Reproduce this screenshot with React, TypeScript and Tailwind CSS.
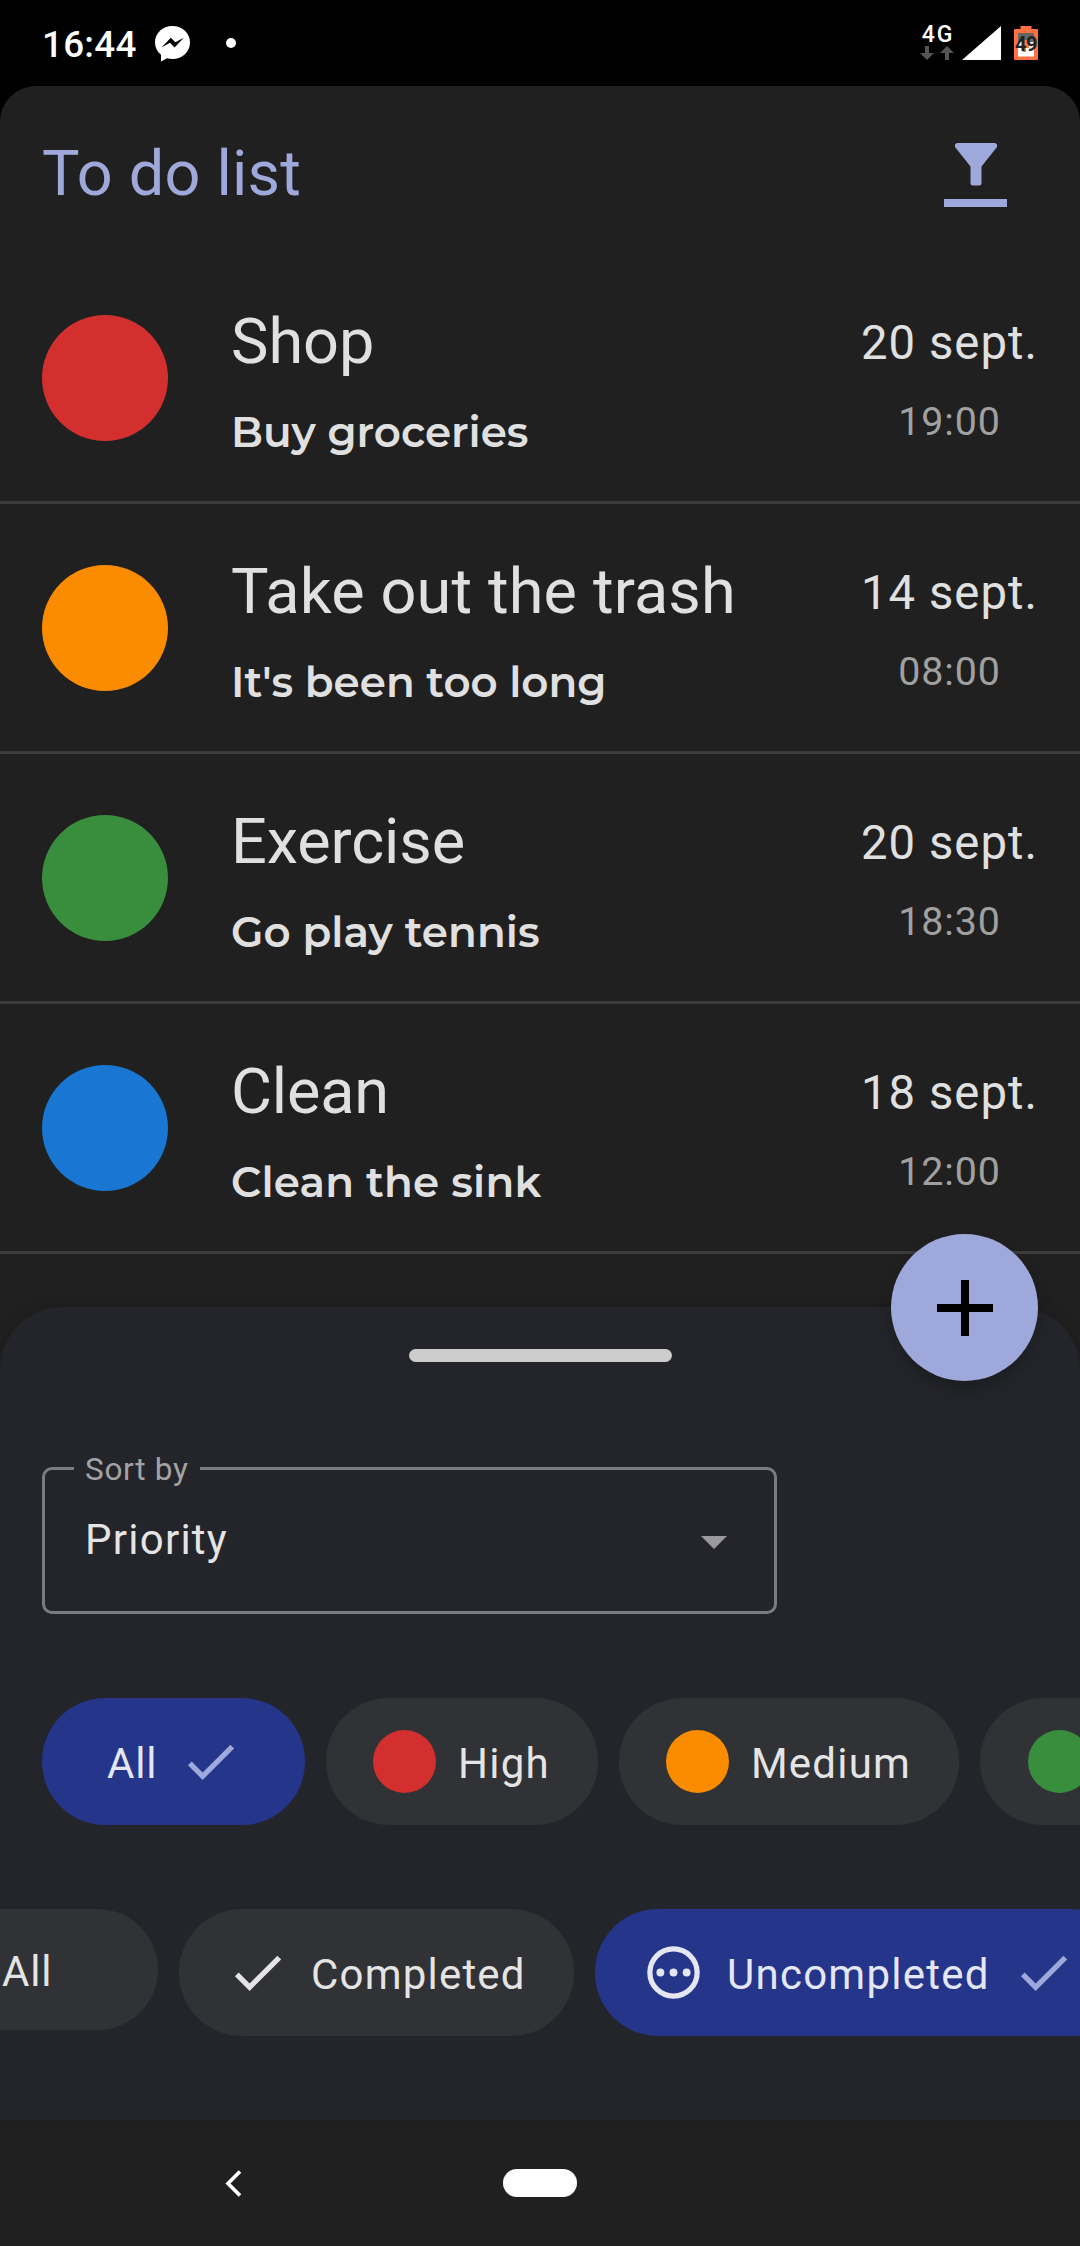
import type { ReactNode } from "react";

type Task = {
  title: string;
  titleSpacing: string;
  note: string;
  noteSpacing: string;
  date: string;
  time: string;
  color: string;
};

const tasks: Task[] = [
  { title: "Shop", titleSpacing: "tracking-normal", note: "Buy groceries", noteSpacing: "tracking-normal", date: "20 sept.", time: "19:00", color: "bg-[#d32f2f]" },
  { title: "Take out the trash", titleSpacing: "tracking-[0.15px]", note: "It's been too long", noteSpacing: "tracking-[0.02px]", date: "14 sept.", time: "08:00", color: "bg-[#fb8c00]" },
  { title: "Exercise", titleSpacing: "tracking-[-0.1px]", note: "Go play tennis", noteSpacing: "tracking-[0.1px]", date: "20 sept.", time: "18:30", color: "bg-[#388e3c]" },
  { title: "Clean", titleSpacing: "tracking-[-0.2px]", note: "Clean the sink", noteSpacing: "tracking-[0.22px]", date: "18 sept.", time: "12:00", color: "bg-[#1976d2]" },
];

function Check({ className }: { className: string }) {
  return (
    <svg viewBox="0 0 24 24" className={`h-[63px] w-[63px] shrink-0 ${className}`} fill="currentColor">
      <path d="M9 16.17 4.83 12l-1.42 1.41L9 19 21 7l-1.41-1.41z" />
    </svg>
  );
}

function Pending() {
  return (
    <svg viewBox="0 0 24 24" className="h-[63px] w-[63px] shrink-0" fill="currentColor">
      <circle cx="12" cy="12" r="9" fill="none" stroke="currentColor" strokeWidth="2" />
      <circle cx="7" cy="12" r="1.5" />
      <circle cx="12" cy="12" r="1.5" />
      <circle cx="17" cy="12" r="1.5" />
    </svg>
  );
}

function StatusBar() {
  return (
    <div className="flex h-[86px] shrink-0 items-start bg-black text-white">
      <span className="ml-[42px] mt-[23px] w-[113px] text-[36.75px] font-medium leading-[44px] tracking-[0.3px]">16:44</span>
      <svg viewBox="0 0 35 36" className="mt-[26px] h-[36px] w-[35px]">
        <path
          fill="#fff"
          d="M17.5 0C7.6 0 0 7.1 0 16.5c0 5 2.2 9.2 6 12.3V35.6l6-3.3c1.7.5 3.6.7 5.5.7C27.4 33 35 25.9 35 16.5S27.4 0 17.5 0Z"
        />
        <path fill="#000" d="m6.5 21.5 9.3-9.8 4.6 4.6 8.4-4.6-9.2 9.8-4.6-4.7Z" />
      </svg>
      <span className="ml-[36px] mt-[38px] h-[10px] w-[10px] rounded-full bg-white" />
      <div className="ml-auto flex">
        <div className="mt-[23px] flex w-[36px] flex-col items-center">
          <span className="pl-[2px] text-[23px] font-medium leading-[24px] tracking-[2px]">4G</span>
          <svg viewBox="0 0 34 14" className="-mt-px h-[14px] w-[34px]" fill="#555">
            <path d="M5 0h4v7h5l-7 7-7-7h5z" />
            <path d="M25 14h4V7h5l-7-7-7 7h5z" />
          </svg>
        </div>
        <svg viewBox="0 0 39 34" className="ml-[7px] mt-[26px] h-[34px] w-[39px]" fill="#fff">
          <path d="M39 0v34H0z" />
        </svg>
        <div className="relative ml-[13px] mr-[42px] mt-[26px] h-[34px] w-[24px]">
          <svg viewBox="0 0 24 34" className="h-[34px] w-[24px]">
            <path fill="#ff7043" d="M6.5 0h11v3H23q1 0 1 1v29q0 1-1 1H1q-1 0-1-1V4q0-1 1-1h5.5z" />
            <path fill="#666" d="M4 7h16v9H4z" />
            <path fill="#fff" d="M4 16h16v14.5H4z" />
            <path fill="#ff7043" d="M9 14h6v8h-3v4H9z" />
          </svg>
          <span className="absolute left-[1px] top-[7px] text-[20px] font-bold leading-[22px] tracking-[-0.5px] text-[#222]">49</span>
        </div>
      </div>
    </div>
  );
}

function TaskRow({ task }: { task: Task }) {
  return (
    <div className="flex h-[250px] shrink-0 items-start border-b-[3px] border-[#3c3c3c] pl-[42px] pr-[42px]">
      <div className={`mt-[61px] h-[126px] w-[126px] rounded-full ${task.color}`} />
      <div className="ml-[63px] mt-[51px] flex flex-1 flex-col text-[#e0e0e0]">
        <span className={`text-[63px] leading-[74px] ${task.titleSpacing}`}>{task.title}</span>
        <span className={`mt-[28px] font-[Montserrat,Inter,sans-serif] text-[42px] font-semibold leading-[50px] ${task.noteSpacing}`}>
          {task.note}
        </span>
      </div>
      <div className="mt-[61px] flex flex-col items-center">
        <span className="text-[47.25px] leading-[56px] tracking-[1.04px] text-[#e0e0e0]">{task.date}</span>
        <span className="mt-[28px] text-[39.4px] leading-[46px] tracking-[0.9px] text-[#a0a0a0]">{task.time}</span>
      </div>
    </div>
  );
}

function Chip({ className, children }: { className: string; children: ReactNode }) {
  return (
    <div className={`flex shrink-0 items-center rounded-[63px] text-[42px] leading-[50px] ${className}`}>
      {children}
    </div>
  );
}

export default function App() {
  return (
    <div className="flex h-[2246px] w-[1080px] flex-col overflow-hidden bg-black font-[Roboto,sans-serif]">
      <StatusBar />
      <div className="flex flex-1 flex-col rounded-t-[36px] bg-[#202020]">
        <header className="flex h-[168px] shrink-0 items-start justify-between pl-[42px] pr-[73px]">
          <h1 className="mt-[51px] text-[63px] leading-[74px] tracking-[0.2px] text-[#9fa8da]">To do list</h1>
          <div className="mt-[57px] flex w-[63px] flex-col items-center">
            <svg viewBox="0 0 42 43" className="h-[43px] w-[42px]" fill="#9fa8da">
              <path d="M2 0h38q3 1 2 4L26.5 23.5V40q0 2.5-2.5 2.5h-6q-2.5 0-2.5-2.5V23.5L0 4Q-1 1 2 0Z" />
            </svg>
            <div className="mt-[13px] h-[8px] w-[63px] bg-[#9fa8da]" />
          </div>
        </header>

        {tasks.map((task) => (
          <TaskRow key={task.title} task={task} />
        ))}

        <section className="relative mt-[53px] flex h-[813px] shrink-0 flex-col rounded-t-[63px] bg-[#24252a] shadow-[0_-2px_16px_rgba(0,0,0,0.12)]">
          <button className="absolute right-[42px] top-[-73px] flex h-[147px] w-[147px] items-center justify-center rounded-full bg-[#9fa8da] shadow-[0_8px_16px_rgba(0,0,0,0.22)]">
            <svg viewBox="0 0 56 56" className="h-[56px] w-[56px]" fill="#000">
              <path d="M24 0h8v24h24v8H32v24h-8V32H0v-8h24z" />
            </svg>
          </button>
          <div className="mx-auto mt-[42px] h-[13px] w-[263px] rounded-full bg-[#cccccc]" />

          <div className="relative ml-[42px] mt-[105px] flex h-[147px] w-[735px] items-center justify-between rounded-[10px] border-[3px] border-[#7b7c7f] pl-[40px] pr-[47px]">
            <span className="absolute left-[29px] top-[-19px] w-[126px] bg-[#24252a] pl-[11px] text-[31.5px] leading-[38px] tracking-[0.7px] text-[#a3a3a5]">
              Sort by
            </span>
            <span className="-mt-[2px] text-[42px] leading-[50px] tracking-[1.25px] text-[#e4e4e4]">Priority</span>
            <svg viewBox="0 0 26 13" className="mt-[4px] h-[13px] w-[26px]" fill="#9a9a9c">
              <path d="M0 0h26L13 13z" />
            </svg>
          </div>

          <div className="mt-[84px] flex h-[127px] gap-[21px] overflow-hidden pl-[42px]">
            <Chip className="w-[263px] bg-[#24358a] pl-[65px] tracking-[0.8px] text-[#e4e6f4]">
              <span className="w-[72px] pt-[4px]">All</span>
              <Check className="text-[#9fa8da]" />
            </Chip>
            <Chip className="w-[272px] bg-[#313235] pl-[47px] tracking-[1.25px] text-[#e4e4e4]">
              <span className="h-[63px] w-[63px] rounded-full bg-[#d32f2f]" />
              <span className="ml-[22px] pt-[4px]">High</span>
            </Chip>
            <Chip className="w-[340px] bg-[#313235] pl-[47px] tracking-[1.2px] text-[#e4e4e4]">
              <span className="h-[63px] w-[63px] rounded-full bg-[#fb8c00]" />
              <span className="ml-[22px] pt-[4px]">Medium</span>
            </Chip>
            <Chip className="w-[260px] bg-[#313235] pl-[48px]">
              <span className="h-[63px] w-[63px] rounded-full bg-[#388e3c]" />
            </Chip>
          </div>

          <div className="mt-[84px] flex h-[127px] items-start gap-[21px] overflow-hidden">
            <Chip className="-ml-[63px] h-[121px] w-[221px] bg-[#313235] pl-[65px] tracking-[0.8px] text-[#e4e4e4]">
              <span className="pt-[4px]">All</span>
            </Chip>
            <Chip className="h-[127px] w-[395px] bg-[#313235] pl-[47px] tracking-[1.2px] text-[#e4e4e4]">
              <Check className="text-[#e4e4e4]" />
              <span className="ml-[22px] pt-[4px]">Completed</span>
            </Chip>
            <Chip className="h-[127px] w-[540px] bg-[#24358a] pl-[47px] tracking-[1.25px] text-[#e4e6f4]">
              <Pending />
              <span className="ml-[22px] w-[285px] pt-[4px]">Uncompleted</span>
              <Check className="text-[#9fa8da]" />
            </Chip>
          </div>
        </section>

        <nav className="flex h-[126px] shrink-0 items-start">
          <svg viewBox="0 0 17 27" className="ml-[225px] mt-[50px] h-[27px] w-[17px]" fill="none" stroke="#fff" strokeWidth="3.6">
            <path d="M15 1.5 3 13.5l12 12" />
          </svg>
          <div className="ml-[261px] mt-[49px] h-[28px] w-[74px] rounded-full bg-white" />
        </nav>
      </div>
    </div>
  );
}
